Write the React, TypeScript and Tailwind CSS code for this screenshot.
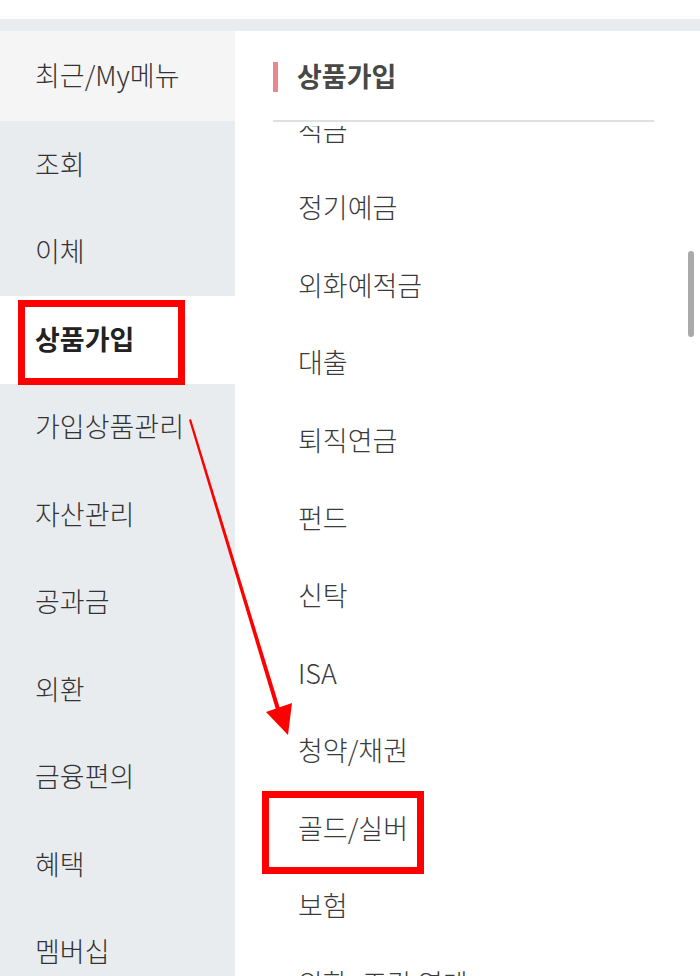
import React from "react";

const leftMenu = [
  "조회",
  "이체",
  "상품가입",
  "가입상품관리",
  "자산관리",
  "공과금",
  "외환",
  "금융편의",
  "혜택",
  "멤버십",
];

const products = [
  "적금",
  "정기예금",
  "외화예적금",
  "대출",
  "퇴직연금",
  "펀드",
  "신탁",
  "ISA",
  "청약/채권",
  "골드/실버",
  "보험",
  "외화·조각 연계",
];

export default function App() {
  return (
    <div
      className="relative w-[700px] h-[976px] overflow-hidden bg-white text-[#333]"
      style={{ fontFamily: '"Noto Sans CJK KR", "Noto Sans", sans-serif' }}
    >
      <div className="h-[19px] bg-white" />
      <div className="h-[12px] bg-[#e9ecef]" />

      <div className="flex h-[945px]">
        {/* left category column */}
        <div className="w-[235px] shrink-0 bg-[#e9ecef]">
          <div className="h-[90px] bg-[#f5f5f5] flex items-center pl-[35px] pb-[2px] text-[27px] font-light">
            최근/My메뉴
          </div>
          {leftMenu.map((item) => (
            <div
              key={item}
              className={`h-[87.5px] flex items-center pl-[35px] pb-[2px] text-[27px] ${
                item === "상품가입" ? "bg-white font-bold text-[#222]" : "font-light"
              }`}
            >
              {item}
            </div>
          ))}
        </div>

        {/* right product panel */}
        <div className="flex-1 flex flex-col pl-[38px] pr-[46px]">
          <div className="h-[89px] flex items-center gap-[19px] pt-[2px]">
            <span className="w-[5px] h-[30px] bg-[#e8878e]" />
            <span className="text-[27px] font-bold text-[#484848]">상품가입</span>
          </div>
          <div className="h-[2px] bg-[#e0e0e0]" />
          <div className="h-[4px]" />
          <div className="flex-1 overflow-hidden">
            <div className="mt-[-35px] pl-[25px]">
              {products.map((p) => (
                <div
                  key={p}
                  className="h-[77.6px] flex items-center text-[27px] font-light text-[#3a3a3a]"
                >
                  {p}
                </div>
              ))}
            </div>
          </div>
        </div>
      </div>

      {/* scrollbar */}
      <div className="absolute left-[688px] top-[251px] w-[6px] h-[86px] rounded-full bg-[#aaaaaa]" />

      {/* annotation boxes */}
      <div className="absolute left-[18px] top-[300px] w-[167px] h-[85px] border-[7px] border-[#ff0000]" />
      <div className="absolute left-[262px] top-[791px] w-[162px] h-[83px] border-[7px] border-[#ff0000]" />

      {/* annotation arrow */}
      <svg className="absolute left-0 top-0" width="700" height="976" viewBox="0 0 700 976">
        <polygon points="189,420 191,419 281,712 277,713" fill="#ff0000" />
        <polygon points="266,712 292,703 288,735" fill="#ff0000" />
      </svg>
    </div>
  );
}
